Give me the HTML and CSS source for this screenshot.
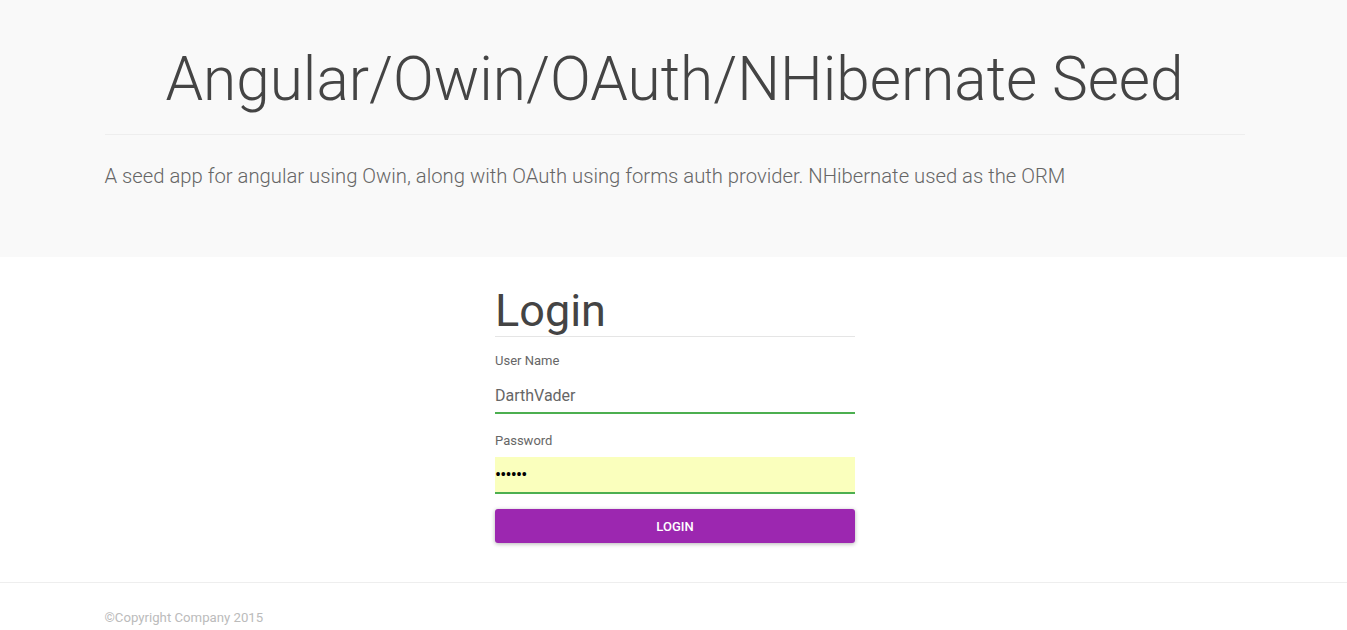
FILE: index.html
```html
<!DOCTYPE html>
<html>
<head>
<meta charset="utf-8">
<link rel="stylesheet" href="styles.css">
</head>
<body>
<header class="jumbotron">
  <div class="container">
    <h1 class="title">Angular/Owin/OAuth/NHibernate Seed</h1>
    <hr class="title-rule">
    <p class="lead">A seed app for angular using Owin, along with OAuth using forms auth provider. NHibernate used as the ORM</p>
  </div>
</header>
<main class="main">
  <form class="login">
    <h2 class="login-title">Login</h2>
    <div class="field">
      <label class="field-label">User Name</label>
      <div class="input">DarthVader</div>
    </div>
    <div class="field">
      <label class="field-label">Password</label>
      <div class="input input-auto">&bull;&bull;&bull;&bull;&bull;&bull;</div>
    </div>
    <button type="button" class="btn">LOGIN</button>
  </form>
</main>
<footer class="footer">
  <div class="container">
    <p class="copy">&copy;Copyright Company 2015</p>
  </div>
</footer>
</body>
</html>
```

FILE: styles.css
```css
* { box-sizing: border-box; }
html, body { margin: 0; padding: 0; }
body {
  font-family: Roboto, "Noto Sans", sans-serif;
  background: #fff;
  color: #666;
}
.container {
  width: 1170px;
  margin-left: calc(50% - 584px);
  padding: 0 15px;
}
.jumbotron {
  background: #f9f9f9;
  height: 257px;
  padding-top: 40px;
}
.title {
  margin: 0;
  text-align: center;
  font-weight: 300;
  font-size: 60.3px;
  line-height: 80px;
  color: #444;
}
.title-rule {
  margin: 14px 0 0;
  border: 0;
  border-top: 1px solid #eee;
}
.lead {
  margin: 27px 0 0;
  font-size: 20.25px;
  font-weight: 300;
  line-height: 28px;
  color: #666;
}
.main {
  display: flex;
  justify-content: center;
  padding-left: 3px;
  padding-top: 30px;
  padding-bottom: 39px;
}
.login {
  width: 360px;
}
.login-title {
  margin: 0;
  font-size: 45px;
  font-weight: 400;
  line-height: 48px;
  color: #444;
  padding-bottom: 1px;
  border-bottom: 1px solid #e5e5e5;
}
.field { margin-top: 14px; }
.field + .field { margin-top: 17px; }
.field-label {
  display: block;
  font-size: 13px;
  line-height: 18px;
  padding-top: 1px;
  color: #666;
}
.input {
  margin-top: 7px;
  height: 37px;
  line-height: 37px;
  font-size: 16px;
  color: #666;
  border-bottom: 2px solid #4caf50;
}
.input-auto {
  background: #faffbd;
  color: #000;
  font-size: 18px;
  letter-spacing: -0.8px;
  line-height: 35px;
}
.btn {
  display: block;
  width: 100%;
  margin-top: 15px;
  height: 34px;
  border: 0;
  border-radius: 3px;
  background: #9c27b0;
  color: #fff;
  font-family: Roboto, sans-serif;
  font-size: 13px;
  font-weight: 500;
  box-shadow: 0 1px 4px rgba(0,0,0,0.3);
}
.footer {
  border-top: 1px solid #eee;
  padding-top: 27px;
}
.copy {
  margin: 0;
  font-size: 13.2px;
  color: #bbb;
}
```
